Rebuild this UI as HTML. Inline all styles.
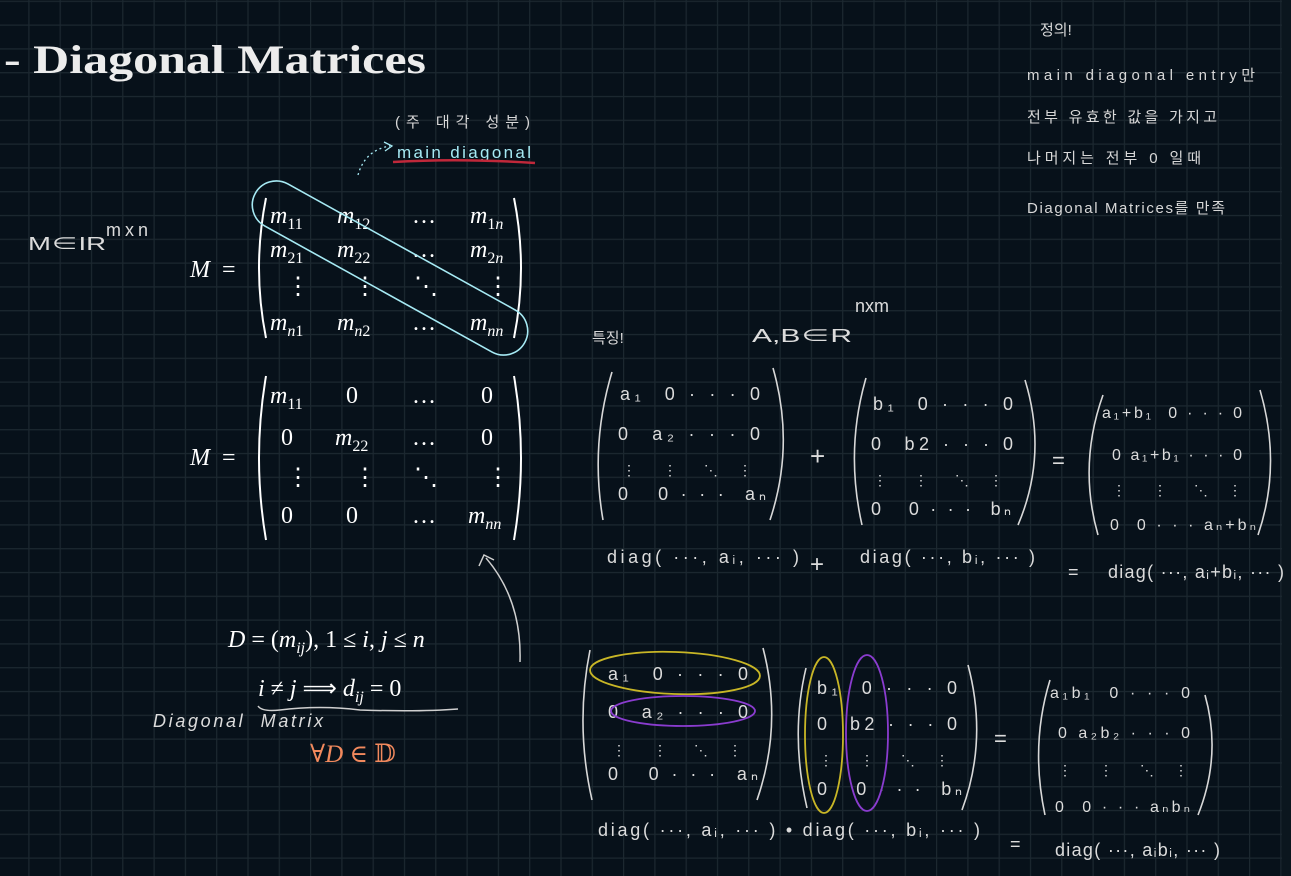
<!DOCTYPE html>
<html><head><meta charset="utf-8"><style>
html,body{margin:0;padding:0;background:#07111a;}
svg{display:block}
text{white-space:pre}
.m{font-family:"Liberation Serif",serif;font-style:italic;fill:#fff;font-size:24px}
.r{font-family:"Liberation Serif",serif;font-style:normal;fill:#fff;font-size:24px}
.h{font-family:"Liberation Sans","Noto Sans CJK KR",sans-serif;fill:#dcdcdc;font-size:18px}
.hk{font-family:"Liberation Sans","Noto Sans CJK KR",sans-serif;fill:#d8d8d8;font-size:15px}
</style></head><body>
<svg width="1291" height="876" viewBox="0 0 1291 876" xmlns="http://www.w3.org/2000/svg" xml:space="preserve">
<defs>
<pattern id="g" x="28.3" y="0.7" width="31.3" height="23.8" patternUnits="userSpaceOnUse">
<path d="M0 0V23.8M0 0H31.3" stroke="#1c2830" stroke-width="2.4" fill="none"/>
</pattern>
</defs>
<rect width="1291" height="876" fill="#07111a"/>
<rect width="1291" height="876" fill="url(#g)"/>
<rect x="1282" y="0" width="9" height="876" fill="#0b161e"/>

<text x="4" y="73" font-family="Liberation Serif,serif" font-weight="bold" font-size="40" fill="#ececec" textLength="422" lengthAdjust="spacingAndGlyphs">- Diagonal Matrices</text>

<text x="395" y="127" class="hk" font-size="14" textLength="135">(주 대각 성분)</text>
<text x="397" y="158" font-family="Liberation Sans,sans-serif" font-size="17" fill="#a6eaf4" textLength="134">main diagonal</text>
<path d="M393 162 Q460 158 535 163" stroke="#c0283a" stroke-width="2.5" fill="none"/>
<path d="M358 175 Q365 150 390 146" stroke="#a6eaf4" stroke-width="1.3" stroke-dasharray="2 3" fill="none"/>
<path d="M384 142 L392 146 L385 151" stroke="#a6eaf4" stroke-width="1.3" fill="none"/>

<text x="28" y="250" class="h" font-size="20" textLength="78" lengthAdjust="spacingAndGlyphs">M∈IR</text>
<text x="106" y="236" class="h" font-size="11" textLength="42">mxn</text>

<text x="190" y="277" class="m">M</text><text x="222" y="277" class="r">=</text>
<path d="M266 198 Q252 268 266 338" stroke="#fff" stroke-width="2" fill="none"/>
<path d="M514 198 Q528 268 514 338" stroke="#fff" stroke-width="2" fill="none"/>
<text x="270" y="223" class="m">m<tspan font-size="16" dy="6" font-style="normal">11</tspan></text>
<text x="337" y="223" class="m">m<tspan font-size="16" dy="6" font-style="normal">12</tspan></text>
<text x="412" y="223" class="r">…</text>
<text x="470" y="223" class="m">m<tspan font-size="16" dy="6" font-style="normal">1</tspan><tspan font-size="16">n</tspan></text>
<text x="270" y="257" class="m">m<tspan font-size="16" dy="6" font-style="normal">21</tspan></text>
<text x="337" y="257" class="m">m<tspan font-size="16" dy="6" font-style="normal">22</tspan></text>
<text x="412" y="257" class="r">…</text>
<text x="470" y="257" class="m">m<tspan font-size="16" dy="6" font-style="normal">2</tspan><tspan font-size="16">n</tspan></text>
<text x="286" y="294" class="r">⋮</text><text x="353" y="294" class="r">⋮</text><text x="414" y="294" class="r">⋱</text><text x="486" y="294" class="r">⋮</text>
<text x="270" y="330" class="m">m<tspan font-size="16" dy="6">n</tspan><tspan font-style="normal" font-size="16">1</tspan></text>
<text x="337" y="330" class="m">m<tspan font-size="16" dy="6">n</tspan><tspan font-style="normal" font-size="16">2</tspan></text>
<text x="412" y="330" class="r">…</text>
<text x="470" y="330" class="m">m<tspan font-size="16" dy="6">nn</tspan></text>
<rect x="236" y="244" width="308" height="48" rx="24" transform="rotate(29 390 268)" stroke="#a6eaf4" stroke-width="1.6" fill="none"/>

<text x="190" y="465" class="m">M</text><text x="222" y="465" class="r">=</text>
<path d="M266 376 Q252 458 266 540" stroke="#fff" stroke-width="2" fill="none"/>
<path d="M514 376 Q528 458 514 540" stroke="#fff" stroke-width="2" fill="none"/>
<text x="270" y="403" class="m">m<tspan font-size="16" dy="6" font-style="normal">11</tspan></text>
<text x="346" y="403" class="r">0</text><text x="412" y="403" class="r">…</text><text x="481" y="403" class="r">0</text>
<text x="281" y="445" class="r">0</text>
<text x="335" y="445" class="m">m<tspan font-size="16" dy="6" font-style="normal">22</tspan></text>
<text x="412" y="445" class="r">…</text><text x="481" y="445" class="r">0</text>
<text x="286" y="485" class="r">⋮</text><text x="353" y="485" class="r">⋮</text><text x="414" y="485" class="r">⋱</text><text x="486" y="485" class="r">⋮</text>
<text x="281" y="523" class="r">0</text><text x="346" y="523" class="r">0</text><text x="412" y="523" class="r">…</text>
<text x="468" y="523" class="m">m<tspan font-size="16" dy="6">nn</tspan></text>

<path d="M520 662 Q522 600 486 558" stroke="#cfcfcf" stroke-width="1.5" fill="none"/>
<path d="M479 566 L484 555 L494 560" stroke="#cfcfcf" stroke-width="1.5" fill="none"/>

<text x="228" y="647" class="m">D <tspan font-style="normal">= (</tspan>m<tspan font-size="16" dy="6">ij</tspan><tspan dy="-6" font-style="normal">), 1 ≤ </tspan>i<tspan font-style="normal">, </tspan>j<tspan font-style="normal"> ≤ </tspan>n</text>
<text x="258" y="696" class="m">i <tspan font-style="normal">≠ </tspan>j<tspan font-style="normal"> ⟹ </tspan>d<tspan font-size="16" dy="6">ij</tspan><tspan dy="-6" font-style="normal"> = 0</tspan></text>
<path d="M258 706 Q262 712 280 710 Q320 705 360 710 Q420 712 458 709" stroke="#cfcfcf" stroke-width="1.5" fill="none"/>
<text x="153" y="727" class="h" font-size="15" font-style="italic" textLength="170">Diagonal  Matrix</text>
<text x="310" y="762" font-family="Liberation Serif,DejaVu Serif,serif" font-size="25" fill="#f2895d">∀<tspan font-style="italic">D</tspan> ∈ 𝔻</text>

<text x="1040" y="35" class="hk" font-size="16">정의!</text>
<text x="1027" y="80" class="hk" font-size="15" textLength="228">main diagonal entry만</text>
<text x="1027" y="122" class="hk" font-size="15" textLength="190">전부 유효한 값을 가지고</text>
<text x="1027" y="163" class="hk" font-size="15" textLength="174">나머지는 전부 0 일때</text>
<text x="1027" y="213" class="hk" font-size="15" textLength="198">Diagonal Matrices를 만족</text>

<text x="592" y="343" class="hk" font-size="14">특징!</text>
<text x="752" y="342" class="h" font-size="30" textLength="100" lengthAdjust="spacingAndGlyphs">A,B∈R</text>
<text x="855" y="312" class="h" font-size="12">nxm</text>

<g stroke="#d8d8d8" stroke-width="1.6" fill="none">
<path d="M612 372 Q590 445 603 520"/><path d="M773 368 Q795 445 770 520"/>
<path d="M866 378 Q845 450 862 525"/><path d="M1025 380 Q1048 455 1018 525"/>
<path d="M1103 395 Q1078 465 1098 535"/><path d="M1260 390 Q1282 465 1258 535"/>
<path d="M590 650 Q575 725 592 800"/><path d="M763 648 Q783 725 757 800"/>
<path d="M806 668 Q790 735 807 808"/><path d="M968 665 Q988 740 962 810"/>
<path d="M1050 680 Q1030 745 1045 815"/><path d="M1205 695 Q1222 755 1198 815"/>
</g>
<g class="h" font-size="19">
<text x="620" y="400" textLength="140">a₁  0 · · · 0</text>
<text x="618" y="440" textLength="142">0  a₂ · · · 0</text>
<text x="622" y="475" font-size="14" textLength="130">⋮        ⋮        ⋱      ⋮</text>
<text x="618" y="500" textLength="148">0   0 · · ·  aₙ</text>
<text x="873" y="410" textLength="140">b₁  0 · · · 0</text>
<text x="871" y="450" textLength="142">0  b2 · · · 0</text>
<text x="873" y="485" font-size="14" textLength="130">⋮        ⋮        ⋱      ⋮</text>
<text x="871" y="515" textLength="140">0   0 · · ·  bₙ</text>
<text x="1102" y="418" font-size="16" textLength="140">a₁+b₁  0 · · · 0</text>
<text x="1112" y="460" font-size="16" textLength="130">0 a₁+b₁ · · · 0</text>
<text x="1112" y="495" font-size="14" textLength="130">⋮        ⋮        ⋱      ⋮</text>
<text x="1110" y="530" font-size="16" textLength="146">0  0 · · · aₙ+bₙ</text>
<text x="810" y="465" font-size="26">+</text>
<text x="1052" y="468" font-size="22">=</text>
<text x="607" y="563" textLength="192">diag( ···, aᵢ, ··· )</text>
<text x="810" y="572" font-size="24">+</text>
<text x="860" y="563" textLength="175">diag( ···, bᵢ, ··· )</text>
<text x="1068" y="578">=</text>
<text x="1108" y="578" textLength="176">diag( ···, aᵢ+bᵢ, ··· )</text>

<text x="608" y="680" textLength="140">a₁  0 · · · 0</text>
<text x="608" y="718" textLength="140">0  a₂ · · · 0</text>
<text x="612" y="755" font-size="14" textLength="130">⋮        ⋮        ⋱      ⋮</text>
<text x="608" y="780" textLength="150">0   0 · · ·  aₙ</text>
<text x="817" y="694" textLength="140">b₁  0 · · · 0</text>
<text x="817" y="730" textLength="140">0  b2 · · · 0</text>
<text x="819" y="765" font-size="14" textLength="130">⋮        ⋮        ⋱      ⋮</text>
<text x="817" y="795" textLength="145">0   0 · · ·  bₙ</text>
<text x="1050" y="698" font-size="16" textLength="140">a₁b₁  0 · · · 0</text>
<text x="1058" y="738" font-size="16" textLength="132">0 a₂b₂ · · · 0</text>
<text x="1058" y="775" font-size="14" textLength="130">⋮        ⋮        ⋱      ⋮</text>
<text x="1055" y="812" font-size="16" textLength="135">0  0 · · · aₙbₙ</text>
<text x="994" y="746" font-size="22">=</text>
<text x="598" y="836" textLength="382">diag( ···, aᵢ, ··· ) • diag( ···, bᵢ, ··· )</text>
<text x="1010" y="850">=</text>
<text x="1055" y="856" textLength="165">diag( ···, aᵢbᵢ, ··· )</text>
</g>
<ellipse cx="675" cy="673" rx="85" ry="21" stroke="#c8b626" stroke-width="1.8" fill="none" transform="rotate(2 675 673)"/>
<ellipse cx="683" cy="711" rx="72" ry="15" stroke="#8a3ccf" stroke-width="1.8" fill="none"/>
<ellipse cx="824" cy="735" rx="19" ry="78" stroke="#c8b626" stroke-width="1.8" fill="none"/>
<ellipse cx="867" cy="733" rx="21" ry="78" stroke="#8a3ccf" stroke-width="1.8" fill="none"/>
</svg>
</body></html>
